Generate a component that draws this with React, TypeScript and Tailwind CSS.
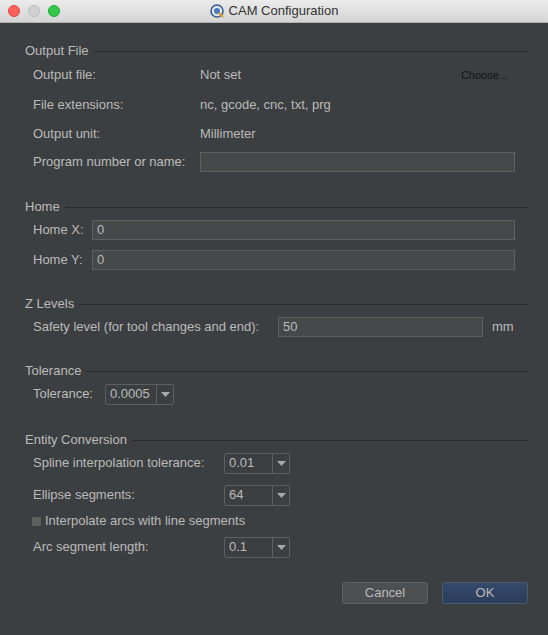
import React from 'react';

function Section({ title, children, className = '' }: { title: string; children: React.ReactNode; className?: string }) {
  return (
    <div className={className}>
      <div className="flex items-center h-[16px]">
        <span className="text-[#bbbbbb]">{title}</span>
        <div className="flex-1 h-px bg-[#2b2b2b] ml-[5px] mr-[20px]" />
      </div>
      <div className="pl-[8px]">{children}</div>
    </div>
  );
}

function TextInput({ value = '', className = '' }: { value?: string; className?: string }) {
  return (
    <div className={`h-[20px] bg-[#45494a] border border-[#5e6060] px-[4px] flex items-center text-[#bbbbbb] ${className}`}>
      {value}
    </div>
  );
}

function Combo({ value, width }: { value: string; width: string }) {
  return (
    <div className={`h-[21px] ${width} bg-[#3c3f41] border border-[#5e6060] rounded-[2px] flex text-[#bbbbbb]`}>
      <div className="flex-1 px-[4px] leading-[17px]">{value}</div>
      <div className="w-[17px] border-l border-[#5e6060] flex items-center justify-center">
        <svg width="9" height="5" viewBox="0 0 9 5"><path d="M0 0h9L4.5 5z" fill="#a8a8a8" /></svg>
      </div>
    </div>
  );
}

export default function App() {
  return (
    <div className="w-[548px] h-[635px] bg-[#3c3f41] flex flex-col text-[13px] overflow-hidden" style={{ fontFamily: '"Liberation Sans", Arial, sans-serif' }}>
      <div className="h-[23px] shrink-0 bg-gradient-to-b from-[#ebebeb] to-[#d5d5d5] border-b border-[#b1b1b1] flex items-center relative">
        <div className="flex gap-[8px] pl-[8px]">
          <div className="w-[12px] h-[12px] rounded-full bg-[#fc605b] border border-[#de4a44]" />
          <div className="w-[12px] h-[12px] rounded-full bg-[#d0d0d0] border border-[#bcbcbc]" />
          <div className="w-[12px] h-[12px] rounded-full bg-[#34c84a] border border-[#27a83a]" />
        </div>
        <div className="absolute inset-0 flex items-center justify-center gap-[5px] text-[#333] text-[13px]">
          <svg width="14" height="14" viewBox="0 0 14 14">
            <circle cx="7" cy="7" r="6" fill="#dfe6f0" stroke="#3a5a8a" strokeWidth="1.5" />
            <circle cx="7" cy="7" r="3" fill="#4a78b8" />
            <path d="M9 9l4 4" stroke="#e0a020" strokeWidth="2" />
          </svg>
          <span>CAM Configuration</span>
        </div>
      </div>

      <div className="pl-[25px] pt-[20px] text-[#bbbbbb] shrink-0">
        <Section title="Output File">
          <div className="flex items-center h-[30px] mt-[1px]">
            <span className="w-[167px]">Output file:</span>
            <span>Not set</span>
            <span className="ml-auto mr-[40px] text-[11px] text-[#111]">Choose...</span>
          </div>
          <div className="flex items-center h-[30px]">
            <span className="w-[167px]">File extensions:</span>
            <span>nc, gcode, cnc, txt, prg</span>
          </div>
          <div className="flex items-center h-[27px]">
            <span className="w-[167px]">Output unit:</span>
            <span>Millimeter</span>
          </div>
          <div className="flex items-center h-[30px]">
            <span className="w-[167px]">Program number or name:</span>
            <TextInput className="w-[315px]" />
          </div>
        </Section>

        <Section title="Home" className="mt-[22px]">
          <div className="flex items-center h-[30px]">
            <span className="w-[59px]">Home X:</span>
            <TextInput value="0" className="w-[423px]" />
          </div>
          <div className="flex items-center h-[30px]">
            <span className="w-[59px]">Home Y:</span>
            <TextInput value="0" className="w-[423px]" />
          </div>
        </Section>

        <Section title="Z Levels" className="mt-[21px]">
          <div className="flex items-center h-[30px]">
            <span className="w-[245px]">Safety level (for tool changes and end):</span>
            <TextInput value="50" className="w-[205px]" />
            <span className="ml-[9px]">mm</span>
          </div>
        </Section>

        <Section title="Tolerance" className="mt-[21px]">
          <div className="flex items-center h-[30px]">
            <span className="w-[72px]">Tolerance:</span>
            <Combo value="0.0005" width="w-[69px]" />
          </div>
        </Section>

        <Section title="Entity Conversion" className="mt-[23px]">
          <div className="flex items-center h-[30px]">
            <span className="w-[191px]">Spline interpolation tolerance:</span>
            <Combo value="0.01" width="w-[66px]" />
          </div>
          <div className="flex items-center h-[30px] mt-[2px]">
            <span className="w-[191px]">Ellipse segments:</span>
            <Combo value="64" width="w-[66px]" />
          </div>
          <div className="flex items-center h-[22px] -ml-[1px]">
            <div className="w-[9px] h-[9px] bg-[#5e6060] rounded-[1px] mr-[4px]" />
            <span>Interpolate arcs with line segments</span>
          </div>
          <div className="flex items-center h-[30px]">
            <span className="w-[191px]">Arc segment length:</span>
            <Combo value="0.1" width="w-[66px]" />
          </div>
        </Section>
      </div>

      <div className="flex justify-end gap-[14px] pr-[20px] mt-[20px] shrink-0">
        <button className="w-[86px] h-[22px] bg-[#4c5052] border border-[#5e6060] rounded-[3px] text-[#bbbbbb]">Cancel</button>
        <button className="w-[86px] h-[22px] bg-gradient-to-b from-[#34496a] to-[#2a3d59] border border-[#4c5a6b] rounded-[3px] text-[#bbbbbb]">OK</button>
      </div>
    </div>
  );
}
